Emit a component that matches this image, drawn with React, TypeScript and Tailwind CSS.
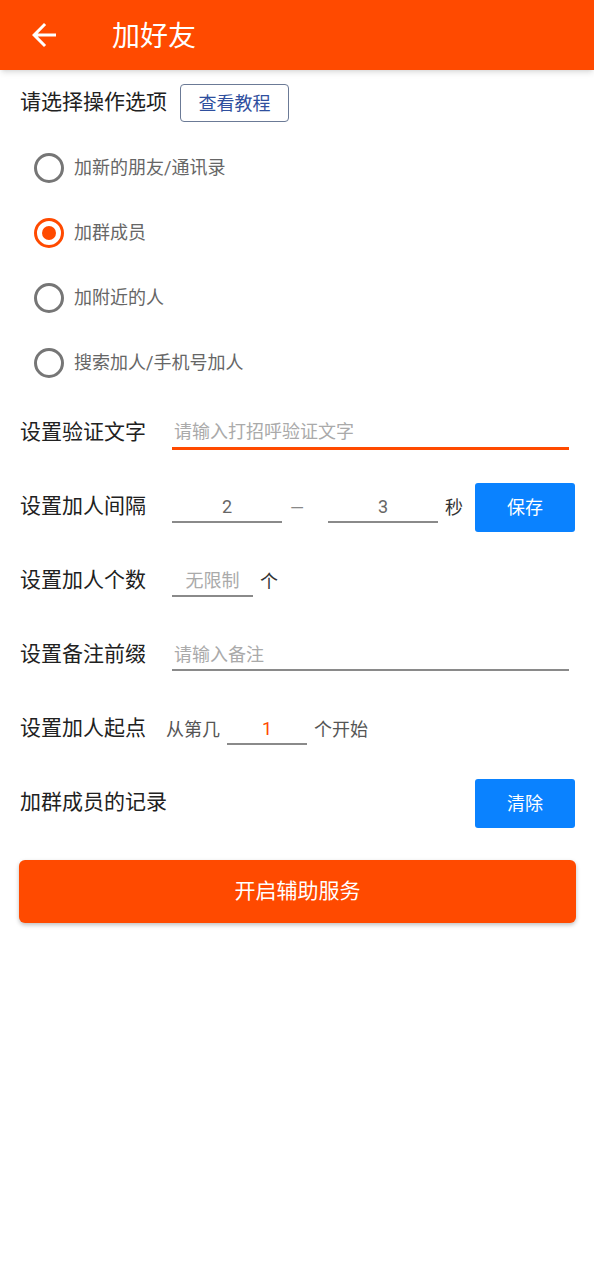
import React, { useState } from "react";

const FONT = { fontFamily: '"Roboto", "Noto Sans CJK SC", sans-serif' };

const OPTIONS = ["加新的朋友/通讯录", "加群成员", "加附近的人", "搜索加人/手机号加人"];

function Radio({ checked, label, onClick }: { checked: boolean; label: string; onClick: () => void }) {
  return (
    <button type="button" onClick={onClick} className="flex h-[65px] items-center pl-[34px]">
      <span
        className={
          checked
            ? "flex h-[30px] w-[30px] items-center justify-center rounded-full border-[3px] border-[#ff4a00]"
            : "flex h-[30px] w-[30px] items-center justify-center rounded-full border-[3px] border-[#767676]"
        }
      >
        {checked && <span className="h-[14px] w-[14px] rounded-full bg-[#ff4a00]" />}
      </span>
      <span className="ml-[10px] text-[18px] text-[#666]">{label}</span>
    </button>
  );
}

function Label({ children }: { children: React.ReactNode }) {
  return <span className="shrink-0 text-[21px] text-[#212121]">{children}</span>;
}

export default function App() {
  const [option, setOption] = useState(1);

  return (
    <div className="min-h-[1280px] bg-white" style={FONT}>
      <header className="flex h-[70px] items-center bg-[#ff4a00] shadow-md">
        <svg className="ml-[26px] h-[36px] w-[36px] fill-white" viewBox="0 0 24 24">
          <path d="M20 11H7.83l5.59-5.59L12 4l-8 8 8 8 1.41-1.41L7.83 13H20v-2z" />
        </svg>
        <h1 className="ml-[50px] mt-[4px] text-[28px] text-white">加好友</h1>
      </header>

      <div className="mt-[14px] flex h-[38px] items-center px-[20px]">
        <Label>请选择操作选项</Label>
        <button
          type="button"
          className="ml-[13px] h-[38px] w-[109px] rounded-[4px] border border-[#6b7a96] text-[18px] text-[#2f4f9e]"
        >
          查看教程
        </button>
      </div>

      <div className="mt-[13px] flex flex-col">
        {OPTIONS.map((o, i) => (
          <Radio key={o} label={o} checked={option === i} onClick={() => setOption(i)} />
        ))}
      </div>

      <div className="flex flex-col pl-[20px] pr-[19px] pt-[1px]">
        <div className="flex h-[74px] items-center">
          <Label>设置验证文字</Label>
          <div className="ml-[26px] mr-[6px] flex h-[34px] flex-1 items-center border-b-[3px] border-[#ff4a00] pl-[2px] text-[18px] text-[#aaa]">
            请输入打招呼验证文字
          </div>
        </div>

        <div className="flex h-[74px] items-center">
          <Label>设置加人间隔</Label>
          <div className="ml-[26px] flex h-[32px] w-[110px] items-center justify-center border-b-2 border-[#8a8a8a] text-[18px] text-[#666]">
            2
          </div>
          <span className="ml-[8px] w-[22px] text-[18px] text-[#888]">—</span>
          <div className="ml-[16px] flex h-[32px] w-[110px] items-center justify-center border-b-2 border-[#8a8a8a] text-[18px] text-[#666]">
            3
          </div>
          <span className="ml-[7px] text-[18px] text-[#333]">秒</span>
          <button
            type="button"
            className="ml-auto h-[49px] w-[100px] rounded-[3px] bg-[#0a82ff] text-[18px] text-white"
          >
            保存
          </button>
        </div>

        <div className="flex h-[74px] items-center">
          <Label>设置加人个数</Label>
          <div className="ml-[26px] flex h-[32px] w-[81px] items-center justify-center border-b-2 border-[#8a8a8a] text-[18px] text-[#aaa]">
            无限制
          </div>
          <span className="ml-[7px] text-[18px] text-[#333]">个</span>
        </div>

        <div className="flex h-[74px] items-center">
          <Label>设置备注前缀</Label>
          <div className="ml-[26px] mr-[6px] flex h-[32px] flex-1 items-center border-b-2 border-[#8a8a8a] pl-[2px] text-[18px] text-[#aaa]">
            请输入备注
          </div>
        </div>

        <div className="flex h-[74px] items-center">
          <Label>设置加人起点</Label>
          <span className="ml-[20px] text-[18px] text-[#555]">从第几</span>
          <div className="ml-[7px] flex h-[32px] w-[80px] items-center justify-center border-b-2 border-[#8a8a8a] text-[18px] text-[#ff4a00]">
            1
          </div>
          <span className="ml-[7px] text-[18px] text-[#555]">个开始</span>
        </div>

        <div className="flex h-[74px] items-center">
          <Label>加群成员的记录</Label>
          <button
            type="button"
            className="ml-auto h-[49px] w-[100px] rounded-[3px] bg-[#0a82ff] text-[18px] text-white"
          >
            清除
          </button>
        </div>

        <button
          type="button"
          className="mt-[20px] -ml-[1px] h-[63px] w-[557px] rounded-[6px] bg-[#ff4a00] text-[21px] text-white shadow-[0_2px_4px_rgba(0,0,0,0.25)]"
        >
          开启辅助服务
        </button>
      </div>
    </div>
  );
}
